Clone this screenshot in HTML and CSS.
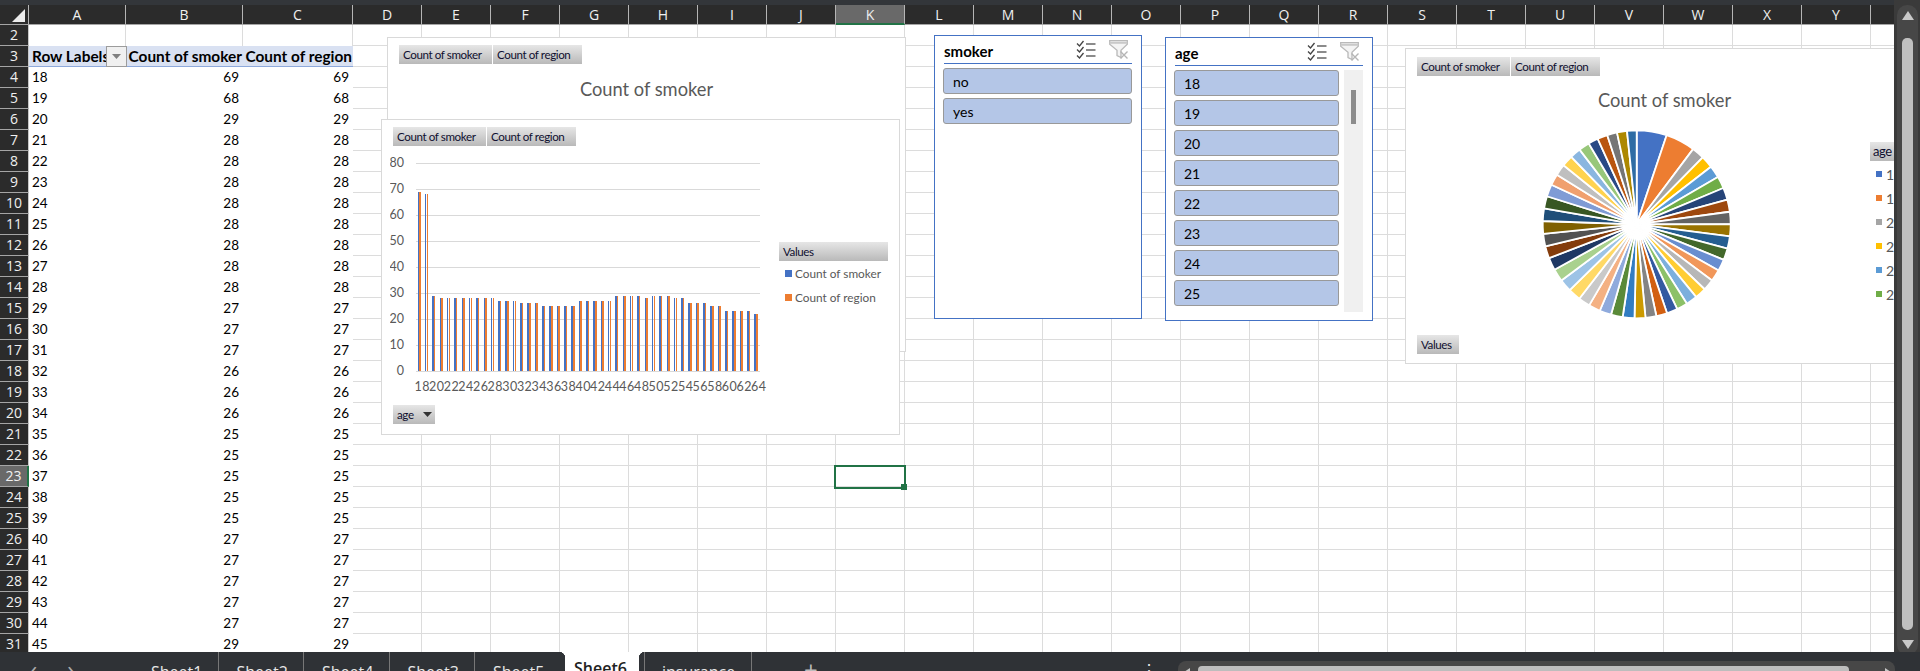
FILE: index.html
```html
<!DOCTYPE html>
<html lang="en">
<head>
<meta charset="utf-8">
<title>Sheet6</title>
<link rel="stylesheet" href="styles.css">
</head>
<body>
<div class="app">
  <div class="main">
    <div class="sheet">
      <div class="topstrip"></div>
      <div class="colhead">
        <div class="corner"><svg width="29" height="20" viewBox="0 0 29 20"><polygon points="12,17 25,4 25,17" fill="#ececec"/></svg></div>
        <div class="ch cw-a">A</div><div class="ch cw-b">B</div><div class="ch cw-c">C</div>
        <div class="ch">D</div><div class="ch">E</div><div class="ch">F</div><div class="ch">G</div><div class="ch">H</div><div class="ch">I</div><div class="ch">J</div>
        <div class="ch ch-sel">K</div>
        <div class="ch">L</div><div class="ch">M</div><div class="ch">N</div><div class="ch">O</div><div class="ch">P</div><div class="ch">Q</div><div class="ch">R</div><div class="ch">S</div><div class="ch">T</div><div class="ch">U</div><div class="ch">V</div><div class="ch">W</div><div class="ch">X</div><div class="ch">Y</div><div class="ch ch-last"></div>
      </div>
      <div class="rows">
        <div class="row"><div class="rh">2</div><div class="c cw-a lined"></div><div class="c cw-b lined"></div><div class="c cw-c lined"></div><div class="rest"></div></div>
        <div class="row row-head"><div class="rh">3</div>
          <div class="c cw-a hd hd-a"><span class="clip">Row Labels</span><span class="fbtn"><svg width="9" height="5" viewBox="0 0 9 5"><polygon points="0,0 9,0 4.5,5" fill="#7f7f7f"/></svg></span></div>
          <div class="c cw-b hd num">Count of smoker</div><div class="c cw-c hd num">Count of region</div><div class="rest"></div></div>
        <div class="row"><div class="rh">4</div><div class="c cw-a">18</div><div class="c cw-b num">69</div><div class="c cw-c num">69</div><div class="rest"></div></div>
        <div class="row"><div class="rh">5</div><div class="c cw-a">19</div><div class="c cw-b num">68</div><div class="c cw-c num">68</div><div class="rest"></div></div>
        <div class="row"><div class="rh">6</div><div class="c cw-a">20</div><div class="c cw-b num">29</div><div class="c cw-c num">29</div><div class="rest"></div></div>
        <div class="row"><div class="rh">7</div><div class="c cw-a">21</div><div class="c cw-b num">28</div><div class="c cw-c num">28</div><div class="rest"></div></div>
        <div class="row"><div class="rh">8</div><div class="c cw-a">22</div><div class="c cw-b num">28</div><div class="c cw-c num">28</div><div class="rest"></div></div>
        <div class="row"><div class="rh">9</div><div class="c cw-a">23</div><div class="c cw-b num">28</div><div class="c cw-c num">28</div><div class="rest"></div></div>
        <div class="row"><div class="rh">10</div><div class="c cw-a">24</div><div class="c cw-b num">28</div><div class="c cw-c num">28</div><div class="rest"></div></div>
        <div class="row"><div class="rh">11</div><div class="c cw-a">25</div><div class="c cw-b num">28</div><div class="c cw-c num">28</div><div class="rest"></div></div>
        <div class="row"><div class="rh">12</div><div class="c cw-a">26</div><div class="c cw-b num">28</div><div class="c cw-c num">28</div><div class="rest"></div></div>
        <div class="row"><div class="rh">13</div><div class="c cw-a">27</div><div class="c cw-b num">28</div><div class="c cw-c num">28</div><div class="rest"></div></div>
        <div class="row"><div class="rh">14</div><div class="c cw-a">28</div><div class="c cw-b num">28</div><div class="c cw-c num">28</div><div class="rest"></div></div>
        <div class="row"><div class="rh">15</div><div class="c cw-a">29</div><div class="c cw-b num">27</div><div class="c cw-c num">27</div><div class="rest"></div></div>
        <div class="row"><div class="rh">16</div><div class="c cw-a">30</div><div class="c cw-b num">27</div><div class="c cw-c num">27</div><div class="rest"></div></div>
        <div class="row"><div class="rh">17</div><div class="c cw-a">31</div><div class="c cw-b num">27</div><div class="c cw-c num">27</div><div class="rest"></div></div>
        <div class="row"><div class="rh">18</div><div class="c cw-a">32</div><div class="c cw-b num">26</div><div class="c cw-c num">26</div><div class="rest"></div></div>
        <div class="row"><div class="rh">19</div><div class="c cw-a">33</div><div class="c cw-b num">26</div><div class="c cw-c num">26</div><div class="rest"></div></div>
        <div class="row"><div class="rh">20</div><div class="c cw-a">34</div><div class="c cw-b num">26</div><div class="c cw-c num">26</div><div class="rest"></div></div>
        <div class="row"><div class="rh">21</div><div class="c cw-a">35</div><div class="c cw-b num">25</div><div class="c cw-c num">25</div><div class="rest"></div></div>
        <div class="row"><div class="rh">22</div><div class="c cw-a">36</div><div class="c cw-b num">25</div><div class="c cw-c num">25</div><div class="rest"></div></div>
        <div class="row"><div class="rh rh-sel">23</div><div class="c cw-a">37</div><div class="c cw-b num">25</div><div class="c cw-c num">25</div><div class="rest"></div></div>
        <div class="row"><div class="rh">24</div><div class="c cw-a">38</div><div class="c cw-b num">25</div><div class="c cw-c num">25</div><div class="rest"></div></div>
        <div class="row"><div class="rh">25</div><div class="c cw-a">39</div><div class="c cw-b num">25</div><div class="c cw-c num">25</div><div class="rest"></div></div>
        <div class="row"><div class="rh">26</div><div class="c cw-a">40</div><div class="c cw-b num">27</div><div class="c cw-c num">27</div><div class="rest"></div></div>
        <div class="row"><div class="rh">27</div><div class="c cw-a">41</div><div class="c cw-b num">27</div><div class="c cw-c num">27</div><div class="rest"></div></div>
        <div class="row"><div class="rh">28</div><div class="c cw-a">42</div><div class="c cw-b num">27</div><div class="c cw-c num">27</div><div class="rest"></div></div>
        <div class="row"><div class="rh">29</div><div class="c cw-a">43</div><div class="c cw-b num">27</div><div class="c cw-c num">27</div><div class="rest"></div></div>
        <div class="row"><div class="rh">30</div><div class="c cw-a">44</div><div class="c cw-b num">27</div><div class="c cw-c num">27</div><div class="rest"></div></div>
        <div class="row"><div class="rh">31</div><div class="c cw-a">45</div><div class="c cw-b num">29</div><div class="c cw-c num">29</div><div class="rest"></div></div>
      </div>

      <div class="selection"><span class="handle"></span></div>

      <div class="chart chart-a">
        <div class="btns"><span class="fld fld-1">Count of smoker</span><span class="fld fld-2">Count of region</span></div>
        <div class="title">Count of smoker</div>
      </div>

      <div class="chart chart-b">
        <div class="btns"><span class="fld fld-1">Count of smoker</span><span class="fld fld-2">Count of region</span></div>
        <div class="plot-row">
          <svg id="bars" class="bars" width="385" height="250" viewBox="390 153 385 250"></svg>
          <div class="legend-b">
            <div class="fld fld-values">Values</div>
            <div class="lg"><i class="sw sw-blue"></i>Count of smoker</div>
            <div class="lg"><i class="sw sw-orange"></i>Count of region</div>
          </div>
        </div>
        <div class="btns btns-age"><span class="fld fld-age">age<svg width="9" height="5" viewBox="0 0 9 5"><polygon points="0,0 9,0 4.5,5" fill="#333"/></svg></span></div>
      </div>

      <div class="slicer slicer-smoker">
        <div class="sl-head"><span class="sl-title">smoker</span>
          <svg class="ic-multi" width="20" height="19" viewBox="0 0 20 19"><g fill="none" stroke="#444" stroke-width="1.3"><path d="M1 3.5l2.5 2.5L7.5 1M1 9.5l2.5 2.5L7.5 7M1 15.5l2.5 2.5L7.5 13"/></g><g stroke="#666" stroke-width="1.6"><path d="M10 4h9.500M10 10h9.500M10 16h9.500"/></g></svg>
          <svg class="ic-funnel" width="20" height="20" viewBox="0 0 20 20"><path d="M.7.7h17.600v3.500l-6.300 6v7.300l-4 -2v-5.300L.7 4.200z" fill="#f4f4f4" stroke="#b9b9b9" stroke-width="1.300"/><path d="M.7 2.800h17.600" stroke="#c9c9c9" stroke-width="2"/><path d="M11.500 11.500l7 7M18.500 11.500l-7 7" stroke="#b5b5b5" stroke-width="1.400"/></svg>
        </div>
        <div class="sl-list">
          <div class="sl-item">no</div>
          <div class="sl-item">yes</div>
        </div>
      </div>

      <div class="slicer slicer-age">
        <div class="sl-head"><span class="sl-title">age</span>
          <svg class="ic-multi" width="20" height="19" viewBox="0 0 20 19"><g fill="none" stroke="#444" stroke-width="1.3"><path d="M1 3.5l2.5 2.5L7.5 1M1 9.5l2.5 2.5L7.5 7M1 15.5l2.5 2.5L7.5 13"/></g><g stroke="#666" stroke-width="1.6"><path d="M10 4h9.500M10 10h9.500M10 16h9.500"/></g></svg>
          <svg class="ic-funnel" width="20" height="20" viewBox="0 0 20 20"><path d="M.7.7h17.600v3.500l-6.300 6v7.300l-4 -2v-5.300L.7 4.200z" fill="#f4f4f4" stroke="#b9b9b9" stroke-width="1.300"/><path d="M.7 2.800h17.600" stroke="#c9c9c9" stroke-width="2"/><path d="M11.500 11.500l7 7M18.500 11.500l-7 7" stroke="#b5b5b5" stroke-width="1.400"/></svg>
        </div>
        <div class="sl-body">
          <div class="sl-list sl-list-age">
            <div class="sl-item">18</div><div class="sl-item">19</div><div class="sl-item">20</div><div class="sl-item">21</div>
            <div class="sl-item">22</div><div class="sl-item">23</div><div class="sl-item">24</div><div class="sl-item">25</div>
          </div>
          <div class="sl-track"><div class="sl-thumb"></div></div>
        </div>
      </div>

      <div class="chart chart-c">
        <div class="btns"><span class="fld fld-1">Count of smoker</span><span class="fld fld-2">Count of region</span></div>
        <div class="title title-c">Count of smoker</div>
        <div class="pie-wrap"><svg id="pie" width="204" height="197" viewBox="1535 126 204 197"></svg></div>
        <div class="btns btns-values"><span class="fld fld-vals">Values</span></div>
        <div class="legend-c">
          <div class="fld fld-agec">age</div>
          <div class="lg lg-c"><i class="sw c1"></i>18</div>
          <div class="lg lg-c"><i class="sw c2"></i>19</div>
          <div class="lg lg-c"><i class="sw c3"></i>20</div>
          <div class="lg lg-c"><i class="sw c4"></i>21</div>
          <div class="lg lg-c"><i class="sw c5"></i>22</div>
          <div class="lg lg-c"><i class="sw c6"></i>23</div>
        </div>
      </div>
    </div>

    <div class="vscroll">
      <div class="v-track">
        <svg class="v-up" width="12" height="9" viewBox="0 0 12 9"><polygon points="6,0 12,9 0,9" fill="#c8c8c8"/></svg>
        <div class="v-thumb"></div>
        <svg class="v-down" width="12" height="9" viewBox="0 0 12 9"><polygon points="0,0 12,0 6,9" fill="#c8c8c8"/></svg>
      </div>
    </div>
  </div>

  <div class="tabbar">
    <div class="nav"><span>&#x2039;</span><span>&#x203A;</span></div>
    <div class="tab">Sheet1</div><div class="tab">Sheet2</div><div class="tab">Sheet4</div><div class="tab">Sheet3</div><div class="tab tab-pre">Sheet5</div>
    <div class="tab tab-active">Sheet6</div>
    <div class="tab tab-ins">insurance</div>
    <div class="plus">+</div>
    <div class="dots">&#x22EE;</div>
    <div class="hscroll"><svg width="6" height="8" viewBox="0 0 6 8"><polygon points="6,0 6,8 0,4" fill="#c8c8c8"/></svg><div class="h-thumb"></div><svg width="6" height="8" viewBox="0 0 6 8"><polygon points="0,0 0,8 6,4" fill="#c8c8c8"/></svg></div>
  </div>
</div>
<script src="charts.js"></script>
</body>
</html>
```
FILE: styles.css
```css
* { box-sizing: border-box; }
html, body { margin: 0; padding: 0; background: #2f3236; }
body { font-family: "Lato", "Liberation Sans", sans-serif; }

.app { width: 1920px; height: 671px; overflow: hidden; display: flex; flex-direction: column; }
.main { display: flex; height: 652px; flex: none; }
.sheet { position: relative; width: 1894px; height: 652px; overflow: hidden; background: #fff; }

.topstrip { height: 5px; background: #33363a; }
.colhead { display: flex; height: 20px; background: #2b2b2b; color: #f0f0f0; font: 14px/20px "Open Sans", sans-serif; }
.corner { width: 29px; flex: none; border-right: 1px solid #b5b5b5; border-bottom: 1px solid #a5a5a5; }
.corner svg { display: block; }
.ch { width: 69px; flex: none; text-align: center; border-right: 1px solid #b5b5b5; border-bottom: 1px solid #a5a5a5; }
.ch.cw-a { width: 97px; } .ch.cw-b { width: 117px; } .ch.cw-c { width: 110px; }
.ch-sel { background: #696969; border-bottom: 2px solid #217346; }
.ch-last { flex: 1; border-right: 0; }

.row { display: flex; height: 21px; }
.rh { width: 29px; flex: none; background: #2b2b2b; color: #f0f0f0; text-align: center; font: 14px/20px "Open Sans", sans-serif; border-right: 1px solid #c8c8c8; border-bottom: 1px solid #a5a5a5; }
.rh-sel { background: #696969; border-right: 2px solid #217346; }
.c { flex: none; padding: 0 3px; font-size: 13.500px; line-height: 21px; color: #000; white-space: nowrap; overflow: hidden; background: #fff; }
.cw-a { width: 97px; } .cw-b { width: 117px; } .cw-c { width: 110px; }
.num { text-align: right; padding-right: 4px; }
.lined { border-right: 1px solid #dcdcdc; }
.rest { flex: 1; background-image: linear-gradient(to right, transparent 68px, #dcdcdc 68px, #dcdcdc 69px, transparent 69px); background-size: 69px 100%; border-bottom: 1px solid #dcdcdc; }
.row-head .c { background: #d9e1f2; border-bottom: 1px solid #8ea9db; }
.hd { font-weight: 700; font-size: 15.400px; }
.hd.num { padding: 0 1px 0 0; }
.hd-a { display: flex; padding: 0 0 0 3px; overflow: visible; }
.clip { flex: 1; overflow: hidden; }
.fbtn { width: 21px; height: 21px; flex: none; display: flex; align-items: center; justify-content: center; background: #f0f0f0; border: 1px solid #9c9c9c; position: relative; z-index: 1; margin-right: -1px; }

.selection { position: absolute; left: 834px; top: 465px; width: 72px; height: 24px; border: 2px solid #217346; }
.handle { position: absolute; right: -3px; bottom: -3px; width: 6px; height: 6px; background: #217346; }

.chart { position: absolute; background: #fff; border: 1px solid #d9d9d9; width: 519px; }
.chart-a { left: 387px; top: 37px; height: 315px; }
.chart-b { left: 381px; top: 119px; height: 316px; }
.chart-c { left: 1405px; top: 48px; height: 316px; }
.btns { display: flex; gap: 1px; margin: 7px 0 0 11px; }
.chart-c > .btns:first-child { margin-top: 8px; }
.fld { display: block; height: 19px; padding-left: 4px; font-size: 11.600px; line-height: 19px; letter-spacing: -0.4px; color: #101030; background: linear-gradient(#e6e6e6, #b9b9b9); white-space: nowrap; overflow: hidden; }
.fld-1 { width: 93px; }
.fld-2 { width: 89px; }
.title { text-align: center; margin-top: 14px; height: 22px; font-size: 18.300px; line-height: 22px; color: #595959; }
.title-c { margin-top: 13px; }

.plot-row { display: flex; margin: 6px 0 0 8px; height: 250px; }
.bars { flex: none; display: block; }
.legend-b { margin: 90px 0 0 4px; width: 109px; }
.fld-values { width: 109px; }
.lg { display: flex; align-items: center; font-size: 11.800px; color: #595959; height: 24px; }
.legend-b .lg { padding-left: 6px; }
.sw { width: 7px; height: 7px; flex: none; margin-right: 3px; }
.sw-blue { background: #4472c4; } .sw-orange { background: #ed7d31; }
.btns-age { margin-top: 3px; }
.fld-age { width: 42px; display: flex; align-items: center; gap: 9px; }
.btns-values { margin-top: 12px; }
.fld-vals { width: 42px; }
.pie-wrap { margin: 15px 0 0 129px; height: 197px; }
.pie-wrap svg { display: block; }
.legend-c { position: absolute; left: 464px; top: 93px; width: 24px; overflow: hidden; }
.fld-agec { width: 40px; margin-bottom: 1px; font-size: 13px; padding-left: 3px; }
.lg-c { font-size: 14px; padding-left: 6px; width: 40px; }
.lg-c .sw { width: 6px; height: 6px; margin-right: 4px; }
.c1 { background: #4472c4; } .c2 { background: #ed7d31; } .c3 { background: #a5a5a5; } .c4 { background: #ffc000; } .c5 { background: #5b9bd5; } .c6 { background: #70ad47; }

.slicer { position: absolute; width: 208px; height: 284px; background: #fff; border: 1px solid #4472c4; padding: 0 9px; }
.slicer-smoker { left: 934px; top: 35px; }
.slicer-age { left: 1165px; top: 37px; }
.sl-head { display: flex; height: 28px; padding: 4px 3px 0 0; border-bottom: 1px solid #4472c4; align-items: flex-start; }
.sl-title { flex: 1; font-weight: 700; font-size: 15px; line-height: 22px; color: #000; }
.ic-multi { margin-right: 13px; flex: none; }
.ic-funnel { flex: none; }
.sl-list { display: flex; flex-direction: column; gap: 4px; margin: 4px 0 0 -1px; }
.sl-item { height: 26px; width: 189px; background: #b4c6e7; border: 1px solid #999; border-radius: 3px; padding-left: 9px; font-size: 14px; line-height: 26px; color: #000; }
.sl-body { display: flex; }
.sl-list-age { flex: none; }
.sl-list-age .sl-item { width: 165px; }
.sl-track { width: 19px; height: 242px; margin: 4px 0 0 5px; background: #f0f0f0; padding: 20px 7px 0; }
.sl-thumb { width: 5px; height: 34px; background: #8c8c8c; }

.vscroll { width: 26px; background: #3a3a3a; padding: 5px 2px 0 3px; flex: none; }
.v-track { height: 650px; background: #474747; border-radius: 10px; display: flex; flex-direction: column; align-items: center; padding-top: 6px; }
.v-up { flex: none; }
.v-thumb { width: 11px; height: 592px; margin-top: 18px; background: #c0c0c0; border-radius: 5px; }
.v-down { flex: none; margin-top: 10px; }

.tabbar { position: relative; display: flex; height: 19px; background: #2f3236; color: #e8e8e8; font: 16px/19px "Open Sans", sans-serif; overflow: hidden; flex: none; }
.nav { width: 133px; flex: none; display: flex; gap: 30px; padding: 5px 0 0 30px; font-size: 24px; line-height: 24px; color: #aaa; }
.tab { width: 85.500px; flex: none; padding: 9px 0 0 18px; line-height: 22px; border-right: 1px solid #777; white-space: nowrap; height: 40px; }
.tab-pre { border-right: 0; width: 90px; }
.tab-active { position: relative; overflow: visible; width: 74px; background: #fff; color: #222; font-weight: 600; padding: 5px 0 0 9px; border: 0; }
.tab-active::before, .tab-active::after { content: ""; position: absolute; top: 0; width: 6px; height: 6px; }
.tab-active::before { left: -6px; background: radial-gradient(circle at 0 100%, transparent 6px, #fff 6.500px); }
.tab-active::after { right: -6px; background: radial-gradient(circle at 100% 100%, transparent 6px, #fff 6.500px); }
.tab-ins { width: 108px; padding-left: 17px; border-left: 1px solid #777; margin-left: 5px; }
.plus { width: 59px; flex: none; padding: 6px 0 0 52px; line-height: 24px; font-size: 24px; color: #bbb; }
.dots { width: 346px; flex: none; text-align: right; padding: 9px 0 0 0; }
.hscroll { margin-left: 21px; width: 717px; height: 30px; margin-top: 9px; background: #474747; border-radius: 8px 8px 0 0; display: flex; align-items: flex-start; padding: 5px 6px 0; gap: 8px; }
.hscroll svg { flex: none; margin-top: 2px; }
.h-thumb { width: 651px; height: 20px; background: #bdbdbd; border-radius: 4px; flex: none; margin-right: 28px; }
```
FILE: charts.js
```js
var NS = "http://www.w3.org/2000/svg";
var DATA = [69,68,29,28,28,28,28,28,28,28,28,27,27,27,26,26,26,25,25,25,25,25,27,27,27,27,27,29,29,29,29,28,29,29,29,28,28,26,26,26,25,25,23,23,23,23,22];
var COLORS = ["#4472C4","#ED7D31","#A5A5A5","#FFC000","#5B9BD5","#70AD47","#264478","#9E480E","#636363","#997300","#255E91","#43682B","#698ED0","#F1975A","#B7B7B7","#FFCD33","#7CAFDD","#8CC168","#335AA1","#D26012","#848484","#CC9A00","#327DC2","#5A8A39","#8FAADC","#F4B183","#C9C9C9","#FFD966","#9DC3E6","#A9D18E","#1F3864","#843C0C","#525252","#7F6000","#1F4E79","#385723","#7F9BD5","#F0A06F","#BFBFBF","#FFD34F","#8AB6E0","#98C77A","#2A4A86","#B9550F","#757575","#AD8800","#2E6CA5"];

function el(parent, name, attrs, text) {
  var n = document.createElementNS(NS, name);
  for (var k in attrs) n.setAttribute(k, attrs[k]);
  if (text !== undefined) n.textContent = text;
  parent.appendChild(n);
  return n;
}

(function bars() {
  var svg = document.getElementById("bars");
  var x0 = 415.5, x1 = 759.5, y0 = 372, perUnit = 2.6;
  var step = (x1 - x0) / DATA.length, w = 1.5;
  for (var v = 0; v <= 80; v += 10) {
    var y = y0 - v * perUnit;
    el(svg, "line", { x1: x0, x2: x1, y1: y, y2: y, stroke: "#d9d9d9", "stroke-width": 1, "shape-rendering": "crispEdges" });
    el(svg, "text", { x: 404, y: y + 4, "text-anchor": "end", "font-family": "Lato, sans-serif", "font-size": 12.5, fill: "#595959" }, v);
  }
  DATA.forEach(function (d, i) {
    var cx = x0 + step * (i + 0.5), h = d * perUnit;
    el(svg, "rect", { x: cx - w, y: y0 - h, width: w, height: h, fill: "#4472C4", "shape-rendering": "crispEdges" });
    el(svg, "rect", { x: cx + 0.2, y: y0 - h, width: w, height: h, fill: "#ED7D31", "shape-rendering": "crispEdges" });
    if (i % 2 === 0) {
      el(svg, "text", { x: cx + 3, y: 392, "text-anchor": "middle", "font-family": "Lato, sans-serif", "font-size": 12.5, fill: "#595959", "letter-spacing": 0.5 }, 18 + i);
    }
  });
})();

(function pie() {
  var svg = document.getElementById("pie");
  var cx = 1636.7, cy = 224.3, r = 94;
  var total = DATA.reduce(function (a, b) { return a + b; }, 0), a = 0;
  DATA.forEach(function (d, i) {
    var b = a + d / total * 2 * Math.PI;
    var p = "M" + cx + " " + cy +
      "L" + (cx + r * Math.sin(a)) + " " + (cy - r * Math.cos(a)) +
      "A" + r + " " + r + " 0 0 1 " + (cx + r * Math.sin(b)) + " " + (cy - r * Math.cos(b)) + "Z";
    el(svg, "path", { d: p, fill: COLORS[i], stroke: "#fff", "stroke-width": 1.8, "stroke-linejoin": "round" });
    a = b;
  });
})();
```
